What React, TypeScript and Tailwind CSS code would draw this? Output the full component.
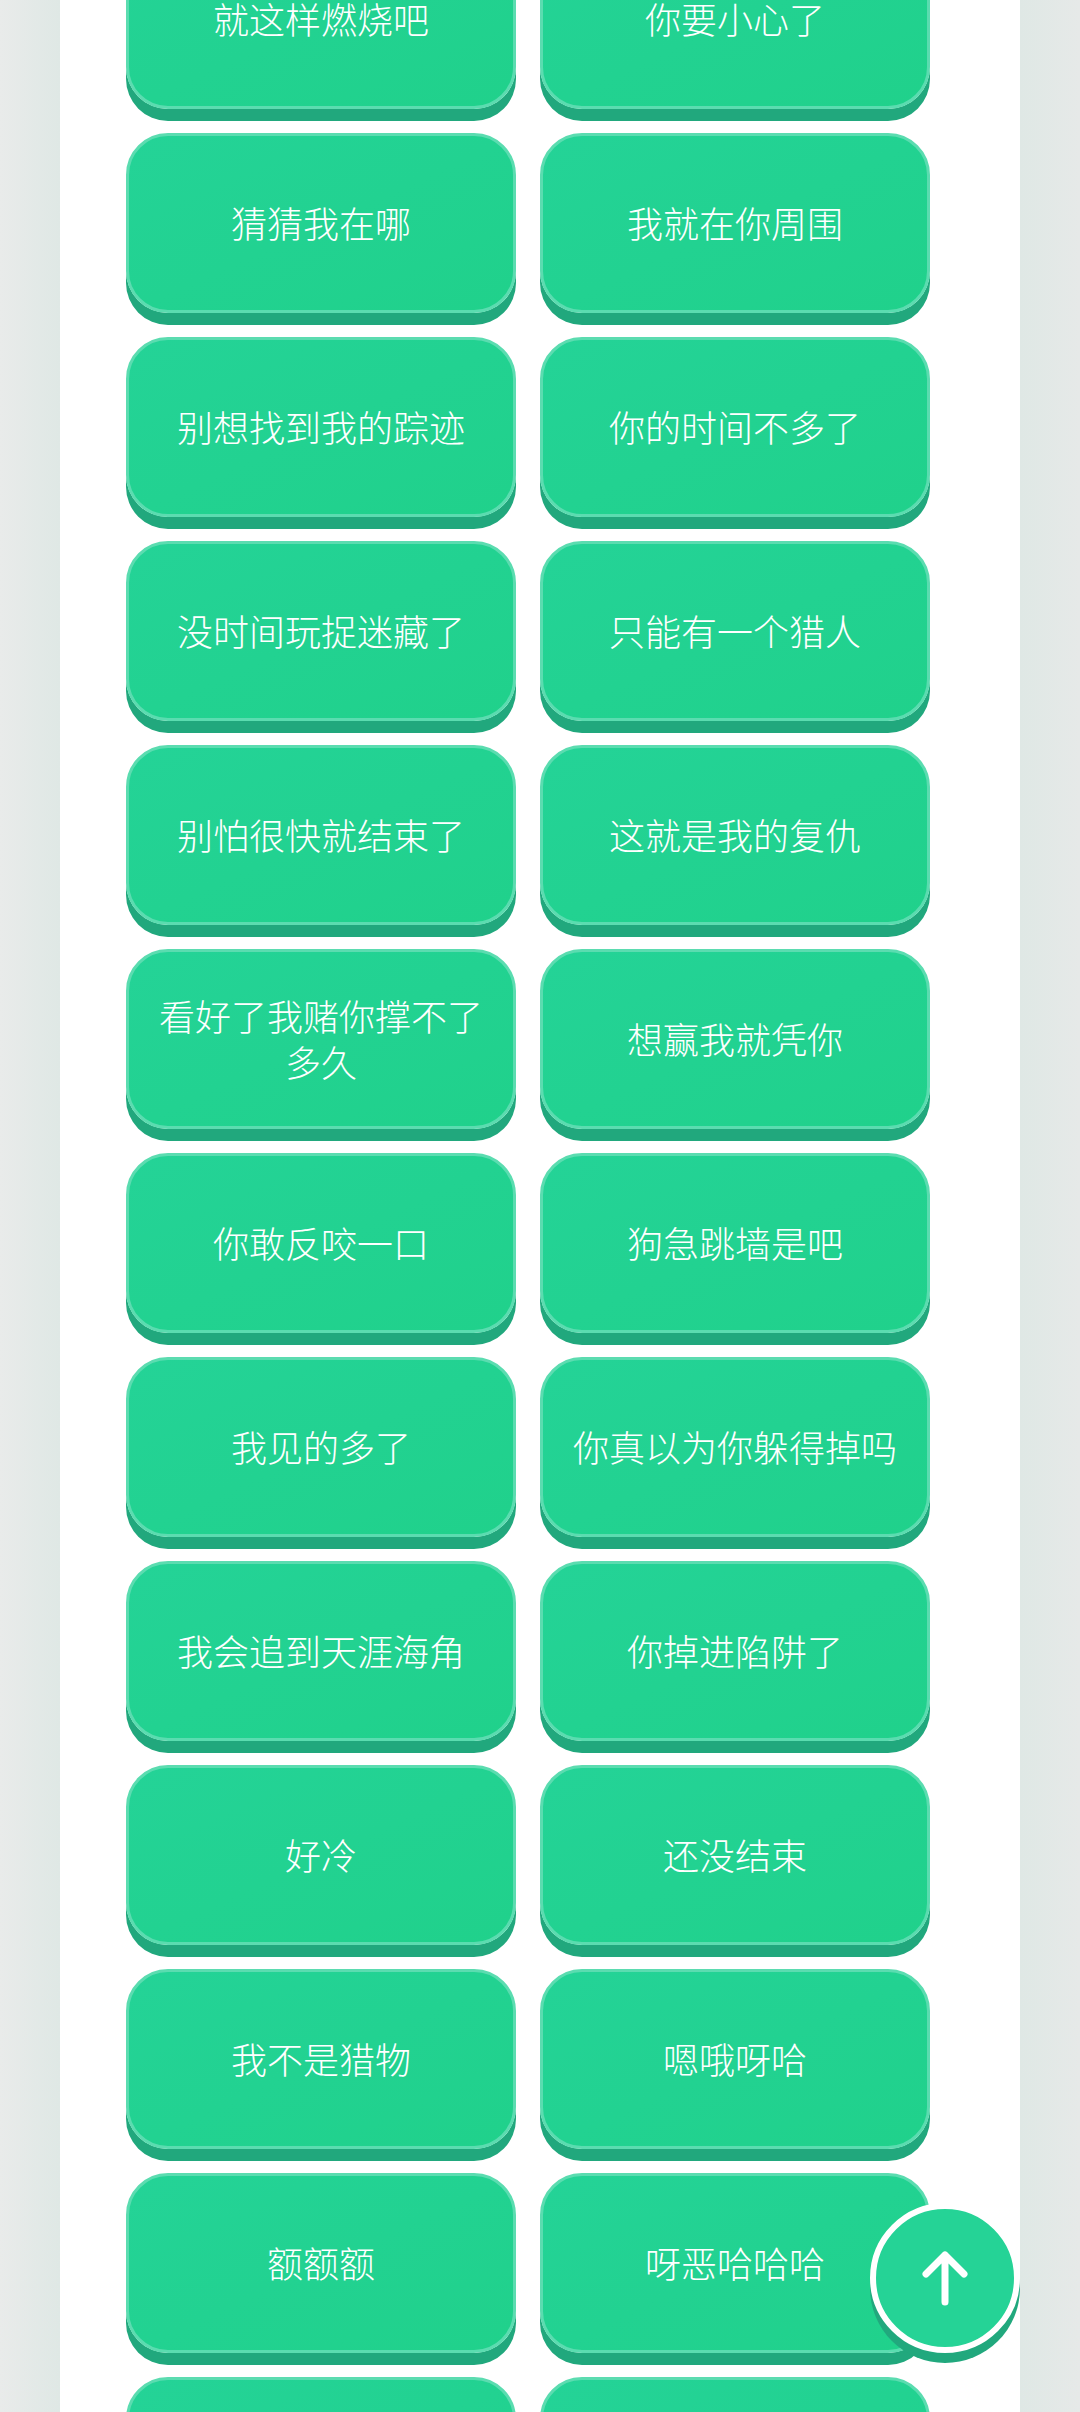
const labels = [
  "就这样燃烧吧",
  "你要小心了",
  "猜猜我在哪",
  "我就在你周围",
  "别想找到我的踪迹",
  "你的时间不多了",
  "没时间玩捉迷藏了",
  "只能有一个猎人",
  "别怕很快就结束了",
  "这就是我的复仇",
  "看好了我赌你撑不了多久",
  "想赢我就凭你",
  "你敢反咬一口",
  "狗急跳墙是吧",
  "我见的多了",
  "你真以为你躲得掉吗",
  "我会追到天涯海角",
  "你掉进陷阱了",
  "好冷",
  "还没结束",
  "我不是猎物",
  "嗯哦呀哈",
  "额额额",
  "呀恶哈哈哈",
  "",
  "",
];

function SoundButton({ label }: { label: string }) {
  return (
    <button className="flex h-[180px] items-center justify-center rounded-[42px] border-[3px] border-[#5bdcb0] bg-gradient-to-br from-[#24d397] to-[#20d18b] px-[24px] pb-[3px] text-center text-[36px] leading-[46px] font-light text-white shadow-[0_12px_0_#21a87d]">
      {label}
    </button>
  );
}

export default function App() {
  return (
    <div
      className="relative h-[2412px] overflow-hidden bg-[linear-gradient(90deg,#e9ebea_0,#dfe8e5_60px,#dfe8e5_1020px,#e6e9e8_1080px)]"
      style={{ fontFamily: "'Noto Sans CJK SC', 'Noto Sans', sans-serif" }}
    >
      <div className="mx-[60px] flow-root h-full bg-white pr-[90px] pl-[66px]">
        {/* Sound grid, scrolled part way down the page */}
        <div className="-mt-[71px] grid grid-cols-2 gap-x-[24px] gap-y-[24px]">
          {labels.map((label, i) => (
            <SoundButton key={i} label={label} />
          ))}
        </div>
      </div>

      {/* Back to top */}
      <button className="absolute top-[2203px] left-[870px] flex h-[150px] w-[150px] items-center justify-center rounded-full border-[6px] border-white bg-[#25d396] shadow-[0_10px_0_#21a87d]">
        <svg width="48" height="56" viewBox="0 0 48 56" fill="none" stroke="white" strokeWidth="7" strokeLinecap="round" strokeLinejoin="round">
          <path d="M24 5v47M5 24 24 5l19 19" />
        </svg>
      </button>
    </div>
  );
}
